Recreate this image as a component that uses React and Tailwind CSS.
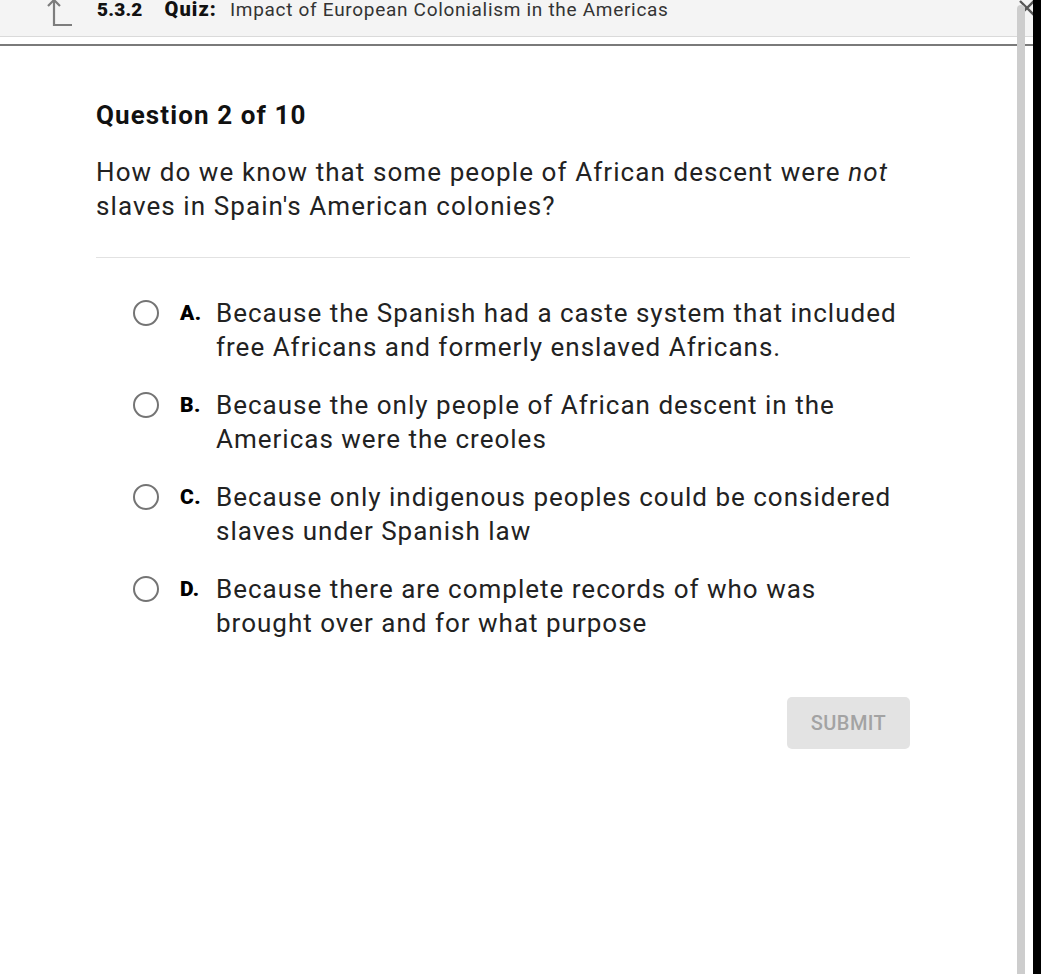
const options = [
  { letter: 'A.', lines: ['Because the Spanish had a caste system that included', 'free Africans and formerly enslaved Africans.'] },
  { letter: 'B.', lines: ['Because the only people of African descent in the', 'Americas were the creoles'] },
  { letter: 'C.', lines: ['Because only indigenous peoples could be considered', 'slaves under Spanish law'] },
  { letter: 'D.', lines: ['Because there are complete records of who was', 'brought over and for what purpose'] },
];

function Option({ letter, lines }) {
  return (
    <div className="flex items-start">
      <div className="ml-[37px] flex h-[34px] w-[26px] shrink-0 items-center">
        <span className="block h-[26px] w-[26px] rounded-full border-[2.5px] border-[#747474]" />
      </div>
      <span className="ml-[21px] w-[36px] shrink-0 text-[21px] font-black leading-[34px] tracking-[0.5px] text-black">{letter}</span>
      <p className="whitespace-nowrap text-[26px] leading-[34px] tracking-[1px] text-[#222]">
        {lines[0]}
        <br />
        {lines[1]}
      </p>
    </div>
  );
}

export default function App() {
  return (
    <div className="flex h-[974px] w-[1041px] overflow-hidden bg-black" style={{ fontFamily: 'Roboto, "Liberation Sans", sans-serif' }}>
      <div className="relative h-full w-[1033px] overflow-hidden bg-white">
        <header className="flex h-[37px] items-start border-b border-[#dadada] bg-[#f4f4f4]">
          <svg className="-mt-[4px] ml-[44px] shrink-0" width="32" height="32" viewBox="0 0 32 32" fill="none" stroke="#7d7d7d" strokeWidth="2.2">
            <path d="M10 4v25h18" />
            <path d="M4 10l6-6 6 6" />
          </svg>
          <div className="-mt-[1px] ml-[21px] flex items-baseline whitespace-nowrap text-[19px] leading-[20px]">
            <span className="font-black tracking-[0.2px] text-[#111]">5.3.2</span>
            <span className="ml-[22px] text-[20px] font-black tracking-[1.1px] text-[#111]">Quiz:</span>
            <span className="ml-[13px] tracking-[0.7px] text-[#333]">Impact of European Colonialism in the Americas</span>
          </div>
          <svg className="-mt-[2px] ml-auto mr-[-4px] shrink-0" width="20" height="20" viewBox="0 0 20 20" stroke="#555" strokeWidth="2.4">
            <path d="M3 17L17 3M3 3l14 14" />
          </svg>
        </header>
        <div className="mt-[7px] h-[1.5px] bg-[#7a7a7a]" />

        <main className="ml-[96px] w-[814px]">
          <h2 className="mt-[55px] text-[26px] font-bold leading-[28px] tracking-[1.1px] text-[#111]">Question 2 of 10</h2>
          <p className="mt-[26px] whitespace-nowrap text-[26px] leading-[34px] tracking-[1.08px] text-[#222]">
            How do we know that some people of African descent were <em>not</em>
            <br />
            slaves in Spain's American colonies?
          </p>
          <div className="mt-[34px] h-px bg-[#e2e2e2]" />

          <div className="mt-[38px] flex flex-col gap-[24px]">
            {options.map((o) => (
              <Option key={o.letter} {...o} />
            ))}
          </div>

          <div className="mt-[57px] flex justify-end">
            <button className="h-[52px] w-[123px] rounded-[5px] bg-[#e3e3e3] text-[20px] font-medium tracking-[0.4px] text-[#a3a3a3]">SUBMIT</button>
          </div>
        </main>

        <div className="absolute right-[8px] top-[5px] bottom-0 w-[8px] rounded-t-full bg-[#cdcdcd]" />
      </div>
    </div>
  );
}
